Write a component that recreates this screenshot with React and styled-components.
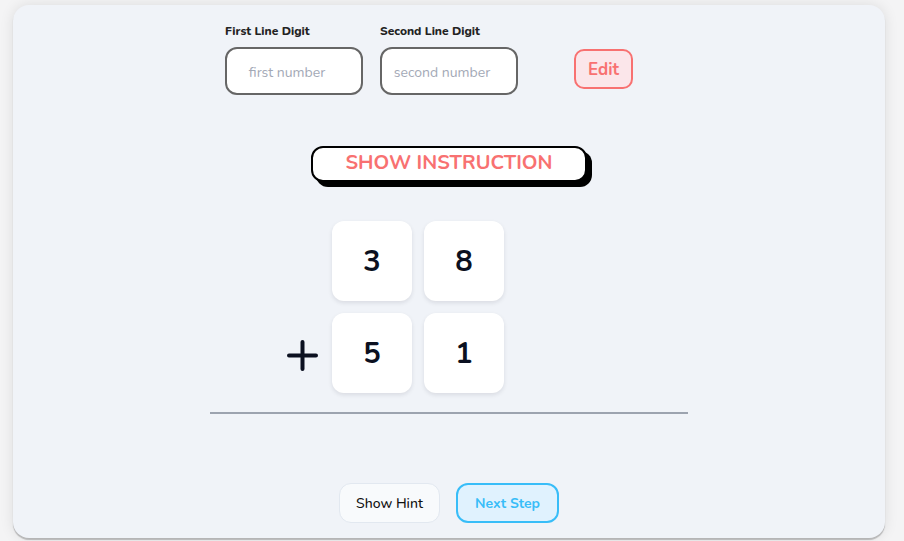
import React from 'react';
import styled, { createGlobalStyle } from 'styled-components';

const GlobalStyle = createGlobalStyle`
  html, body {
    margin: 0;
    padding: 0;
    background: #f4f4f5;
    font-family: "Nunito", "Lato", "Noto Sans", sans-serif;
  }
  * {
    box-sizing: border-box;
  }
`;

const Page = styled.div`
  padding: 5px 0 0 13px;
  height: 541px;
  overflow: hidden;
`;

const Card = styled.div`
  width: 872px;
  height: 533px;
  background: #f0f3f8;
  border-radius: 16px;
  box-shadow: 0 0 14px rgba(0, 0, 0, 0.1), 0 2px 1px rgba(0, 0, 0, 0.22);
  padding-top: 18px;
  display: flex;
  flex-direction: column;
  align-items: center;
`;

const InputRow = styled.div`
  align-self: flex-start;
  margin-left: 212px;
  display: flex;
  align-items: flex-end;
  gap: 17px;
`;

const Field = styled.label`
  display: flex;
  flex-direction: column;
  gap: 8px;
`;

const FieldLabel = styled.span`
  font-size: 12px;
  line-height: 16px;
  font-weight: 800;
  color: #222;
`;

const NumberInput = styled.input`
  width: 138px;
  height: 48px;
  border: 2px solid #666;
  border-radius: 12px;
  background: #fff;
  font-family: inherit;
  font-size: 14px;
  text-align: center;
  padding: 2px 14px 0 0;
  outline: none;

  &::placeholder {
    color: #a3a9b6;
  }
`;

const EditButton = styled.button`
  margin-left: 39px;
  margin-bottom: 6px;
  width: 59px;
  height: 40px;
  border: 2px solid #f87171;
  border-radius: 10px;
  background: #fbe6ea;
  color: #f87171;
  font-family: inherit;
  font-size: 17px;
  font-weight: 700;
  cursor: pointer;
`;

const InstructionButton = styled.button`
  margin-top: 51px;
  width: 276px;
  height: 36px;
  background: #fff;
  border: 2px solid #000;
  border-radius: 12px;
  box-shadow: 5px 5px 0 #000;
  color: #f87171;
  font-family: inherit;
  font-size: 20px;
  font-weight: 700;
  line-height: 1;
  padding: 0 0 2px;
  cursor: pointer;
`;

const Sum = styled.div`
  margin-top: 39px;
  width: 478px;
  padding-bottom: 19px;
  border-bottom: 2px solid #9ca3af;
  display: flex;
  flex-direction: column;
  gap: 12px;
`;

const SumRow = styled.div`
  display: grid;
  grid-template-columns: 110px 80px 80px;
  gap: 12px;
  align-items: center;
`;

const Operator = styled.div`
  display: flex;
  justify-content: flex-end;
  padding: 4px 2px 0 0;
`;

const Tile = styled.div`
  width: 80px;
  height: 80px;
  background: #fff;
  border-radius: 12px;
  box-shadow: 0 2px 4px rgba(15, 23, 42, 0.1);
  display: flex;
  align-items: center;
  justify-content: center;
  font-size: 29px;
  font-weight: 700;
  color: #0b1020;
`;

const Actions = styled.div`
  margin-top: 69px;
  display: flex;
  gap: 16px;
`;

const ActionButton = styled.button`
  height: 40px;
  width: ${p => (p.primary ? '103px' : '101px')};
  border-radius: 12px;
  border: ${p => (p.primary ? '2px solid #38bdf8' : '1px solid #e2e8f0')};
  background: ${p => (p.primary ? '#e0f2fe' : '#f8fafc')};
  color: ${p => (p.primary ? '#38bdf8' : '#111')};
  font-family: inherit;
  font-size: 14px;
  font-weight: ${p => (p.primary ? 700 : 500)};
  cursor: pointer;
`;

const PlusIcon = () => (
  <svg width="31" height="31" viewBox="0 0 31 31" fill="none">
    <path d="M15.5 2v27M2 15.5h27" stroke="#0b1020" strokeWidth="4" strokeLinecap="round" />
  </svg>
);

const App = () => {
  const top = [3, 8];
  const bottom = [5, 1];

  return (
    <Page>
      <GlobalStyle />
      <Card>
        <InputRow>
          <Field>
            <FieldLabel>First Line Digit</FieldLabel>
            <NumberInput placeholder="first number" />
          </Field>
          <Field>
            <FieldLabel>Second Line Digit</FieldLabel>
            <NumberInput placeholder="second number" />
          </Field>
          <EditButton>Edit</EditButton>
        </InputRow>

        <InstructionButton>SHOW INSTRUCTION</InstructionButton>

        <Sum>
          <SumRow>
            <div />
            {top.map((d, i) => (
              <Tile key={i}>{d}</Tile>
            ))}
          </SumRow>
          <SumRow>
            <Operator>
              <PlusIcon />
            </Operator>
            {bottom.map((d, i) => (
              <Tile key={i}>{d}</Tile>
            ))}
          </SumRow>
        </Sum>

        <Actions>
          <ActionButton>Show Hint</ActionButton>
          <ActionButton primary>Next Step</ActionButton>
        </Actions>
      </Card>
    </Page>
  );
};

export default App;
